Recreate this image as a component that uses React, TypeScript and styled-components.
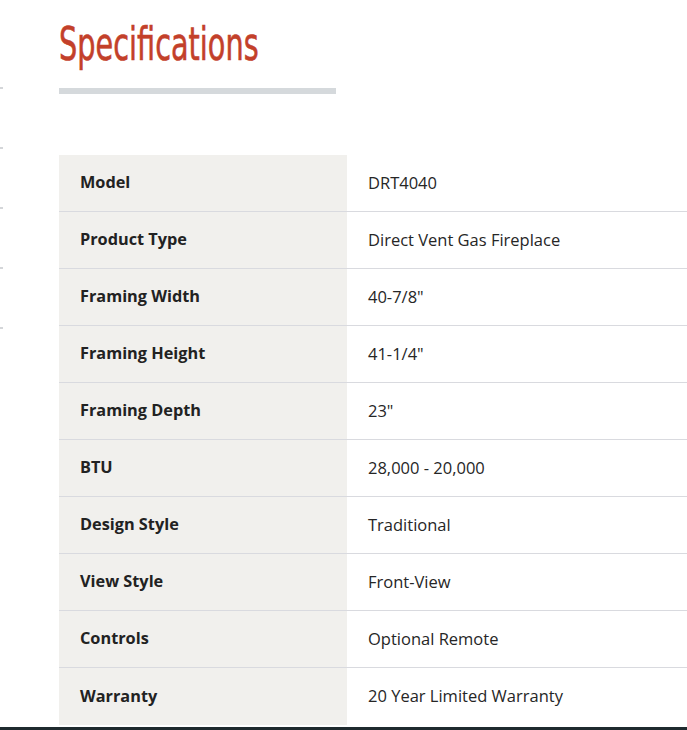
import React from "react";
import styled, { createGlobalStyle } from "styled-components";

const Global = createGlobalStyle`
  html, body { margin: 0; padding: 0; background: #ffffff; overflow: hidden; }
  body { font-family: "Open Sans", "Noto Sans", sans-serif; color: #262626; }
`;

const Page = styled.div`
  position: relative;
  width: 687px;
  height: 730px;
  overflow: hidden;
  display: flex;
  flex-direction: column;
`;

const EdgeMarks = styled.div`
  position: absolute;
  left: 0;
  top: 87px;
  display: flex;
  flex-direction: column;
  gap: 58px;
`;

const EdgeMark = styled.span`
  display: block;
  width: 3px;
  height: 2px;
  background: #d4d6d9;
`;

const Content = styled.main`
  padding: 15px 0 0 59px;
  display: flex;
  flex-direction: column;
`;

const Title = styled.h1`
  margin: 0;
  height: 59px;
  font-family: "DejaVu Sans Condensed", "DejaVu Sans", sans-serif;
  font-weight: 400;
  font-size: 47px;
  line-height: 58px;
  color: #c3402a;
  transform: scaleX(0.68);
  transform-origin: left center;
  white-space: nowrap;
  -webkit-text-stroke: 0.6px #c3402a;
`;

const Rule = styled.div`
  margin-top: 14px;
  width: 277px;
  height: 6px;
  background: #d5d9dc;
`;

const Table = styled.div`
  margin-top: 61px;
  width: 660px;
  display: flex;
  flex-direction: column;
`;

const Row = styled.div<{ $last?: boolean }>`
  display: grid;
  grid-template-columns: 288px 1fr;
  height: 57px;
  box-sizing: border-box;
  border-bottom: ${(p) => (p.$last ? "none" : "1px solid #d9dadf")};
`;

const Label = styled.div`
  background: #f1f0ed;
  display: flex;
  align-items: center;
  padding: 0 0 2px 21px;
  font-weight: 700;
  font-size: 16.3px;
  color: #222222;
`;

const Value = styled.div`
  display: flex;
  align-items: center;
  padding: 0 0 2px 21px;
  font-weight: 400;
  font-size: 16.5px;
  color: #262626;
`;

const Footer = styled.div`
  position: absolute;
  left: 0;
  right: 0;
  top: 727px;
  height: 3px;
  background: #1f2a2e;
`;

const specs: [string, string][] = [
  ["Model", "DRT4040"],
  ["Product Type", "Direct Vent Gas Fireplace"],
  ["Framing Width", '40-7/8"'],
  ["Framing Height", '41-1/4"'],
  ["Framing Depth", '23"'],
  ["BTU", "28,000 - 20,000"],
  ["Design Style", "Traditional"],
  ["View Style", "Front-View"],
  ["Controls", "Optional Remote"],
  ["Warranty", "20 Year Limited Warranty"],
];

export default function App() {
  return (
    <Page>
      <Global />
      <EdgeMarks>
        {[0, 1, 2, 3, 4].map((i) => (
          <EdgeMark key={i} />
        ))}
      </EdgeMarks>
      <Content>
        <Title>Specifications</Title>
        <Rule />
        <Table>
          {specs.map(([k, v], i) => (
            <Row key={k} $last={i === specs.length - 1}>
              <Label>{k}</Label>
              <Value>{v}</Value>
            </Row>
          ))}
        </Table>
      </Content>
      <Footer />
    </Page>
  );
}
